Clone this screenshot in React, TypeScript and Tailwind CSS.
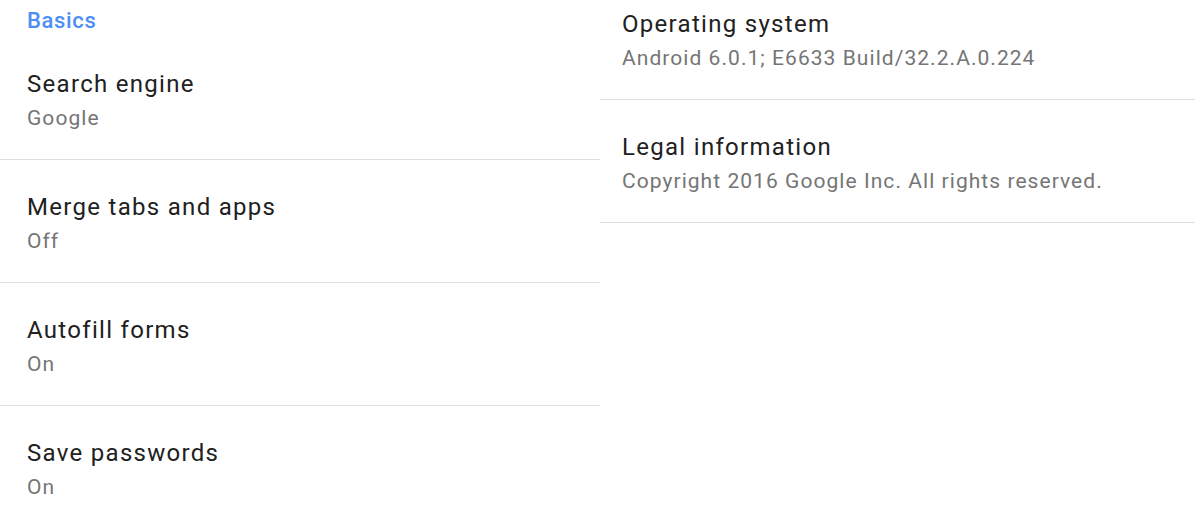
import React from 'react';

type Pref = { title: string; summary: string };

const basics: Pref[] = [
  { title: 'Search engine', summary: 'Google' },
  { title: 'Merge tabs and apps', summary: 'Off' },
  { title: 'Autofill forms', summary: 'On' },
  { title: 'Save passwords', summary: 'On' },
];

const about: Pref[] = [
  { title: 'Operating system', summary: 'Android 6.0.1; E6633 Build/32.2.A.0.224' },
  { title: 'Legal information', summary: 'Copyright 2016 Google Inc. All rights reserved.' },
];

const PrefRow: React.FC<{ pref: Pref; first?: boolean; pad: string }> = ({ pref, first, pad }) => (
  <div className={`${pad} ${first ? 'pt-2' : 'pt-[31px]'} pb-[27px] border-b border-[#e0e0e0]`}>
    <div className="text-[24px] leading-[32px] tracking-[0.054em] text-[#212121]">{pref.title}</div>
    <div className="mt-1 text-[21px] leading-[28px] tracking-[0.05em] text-[#757575]">{pref.summary}</div>
  </div>
);

export default function App() {
  return (
    <div className="w-[1195px] h-[510px] overflow-hidden bg-white flex" style={{ fontFamily: 'Roboto, "Noto Sans", sans-serif' }}>
      <div className="w-[600px] shrink-0">
        <div className="h-[37px] pt-[7px] pl-[27px] text-[22px] leading-[28px] tracking-[0.03em] font-medium text-[#4d8ef5]">Basics</div>
        {basics.map((p) => (
          <PrefRow key={p.title} pref={p} pad="pl-[27px]" />
        ))}
      </div>
      <div className="flex-1">
        {about.map((p, i) => (
          <PrefRow key={p.title} pref={p} first={i === 0} pad="pl-[22px]" />
        ))}
      </div>
    </div>
  );
}
